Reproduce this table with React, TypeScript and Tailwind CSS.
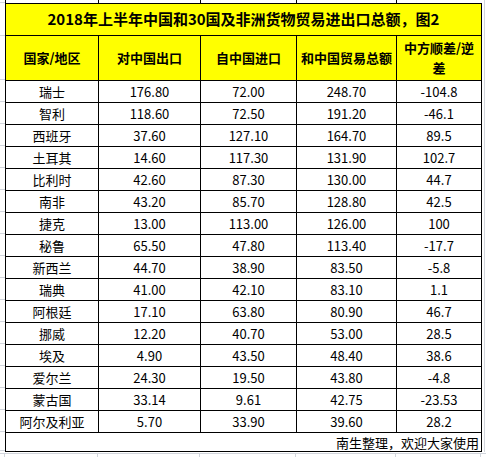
const rows: [string, string, string, string, string][] = [
  ["瑞士", "176.80", "72.00", "248.70", "-104.8"],
  ["智利", "118.60", "72.50", "191.20", "-46.1"],
  ["西班牙", "37.60", "127.10", "164.70", "89.5"],
  ["土耳其", "14.60", "117.30", "131.90", "102.7"],
  ["比利时", "42.60", "87.30", "130.00", "44.7"],
  ["南非", "43.20", "85.70", "128.80", "42.5"],
  ["捷克", "13.00", "113.00", "126.00", "100"],
  ["秘鲁", "65.50", "47.80", "113.40", "-17.7"],
  ["新西兰", "44.70", "38.90", "83.50", "-5.8"],
  ["瑞典", "41.00", "42.10", "83.10", "1.1"],
  ["阿根廷", "17.10", "63.80", "80.90", "46.7"],
  ["挪威", "12.20", "40.70", "53.00", "28.5"],
  ["埃及", "4.90", "43.50", "48.40", "38.6"],
  ["爱尔兰", "24.30", "19.50", "43.80", "-4.8"],
  ["蒙古国", "33.14", "9.61", "42.75", "-23.53"],
  ["阿尔及利亚", "5.70", "33.90", "39.60", "28.2"],
];

const cols = "grid grid-cols-[93px_102px_96px_100px_85px]";
const cell = "flex items-center justify-center border-r border-b border-black";

export default function App() {
  return (
    <div className="w-[486px] h-[457px] bg-white overflow-hidden font-['Noto_Sans_CJK_SC',sans-serif] text-black">
      {/* top strip */}
      <div className="flex h-[3px]">
        <div className="w-[5px] border-b border-gray-300" />
        <div className={`${cols} border-l border-black`}>
          {[0, 1, 2, 3, 4].map((i) => (
            <div key={i} className={i < 4 ? "border-r border-black" : ""} />
          ))}
        </div>
        <div className="w-[3px] border-r border-gray-300" />
      </div>

      <div className="flex">
        {/* left gutter gridlines */}
        <div className="w-[5px] flex flex-col">
          <div className="h-[33px] border-b border-gray-300" />
          <div className="h-[44px] border-b border-gray-300" />
          {rows.map((r) => (
            <div key={r[0]} className="h-[22px] border-b border-gray-300" />
          ))}
          <div className="h-[19px] border-b border-gray-300" />
        </div>

        <div className="border-l border-t border-black">
          <div className={cols}>
            <div className={`${cell} col-span-5 h-[32px] bg-[#ffff00] text-[15px] font-bold`}>
              2018年上半年中国和30国及非洲货物贸易进出口总额，图2
            </div>
            {["国家/地区", "对中国出口", "自中国进口", "和中国贸易总额"].map((h) => (
              <div key={h} className={`${cell} h-[45px] bg-[#ffff00] text-[13px] font-bold`}>
                {h}
              </div>
            ))}
            <div className={`${cell} h-[45px] bg-[#ffff00] text-[13px] font-bold text-center leading-[20px]`}>
              中方顺差/逆
              <br />
              差
            </div>
            {rows.map((r) =>
              r.map((v, i) => (
                <div key={r[0] + i} className={`${cell} h-[22px] text-[13px] leading-none`}>
                  {v}
                </div>
              ))
            )}
            <div className={`${cell} col-span-5 h-[19px] justify-end pr-[2px] text-[13px] leading-none`}>
              南生整理，欢迎大家使用
            </div>
          </div>
        </div>

        <div className="w-[3px] border-r border-gray-300" />
      </div>

      {/* bottom strip gridlines */}
      <div className="flex h-[6px] border-t border-gray-300 mt-[1px]">
        <div className="w-[5px] border-r border-gray-300" />
        <div className={cols}>
          {[0, 1, 2, 3, 4].map((i) => (
            <div key={i} className="border-r border-gray-300" />
          ))}
        </div>
      </div>
    </div>
  );
}
